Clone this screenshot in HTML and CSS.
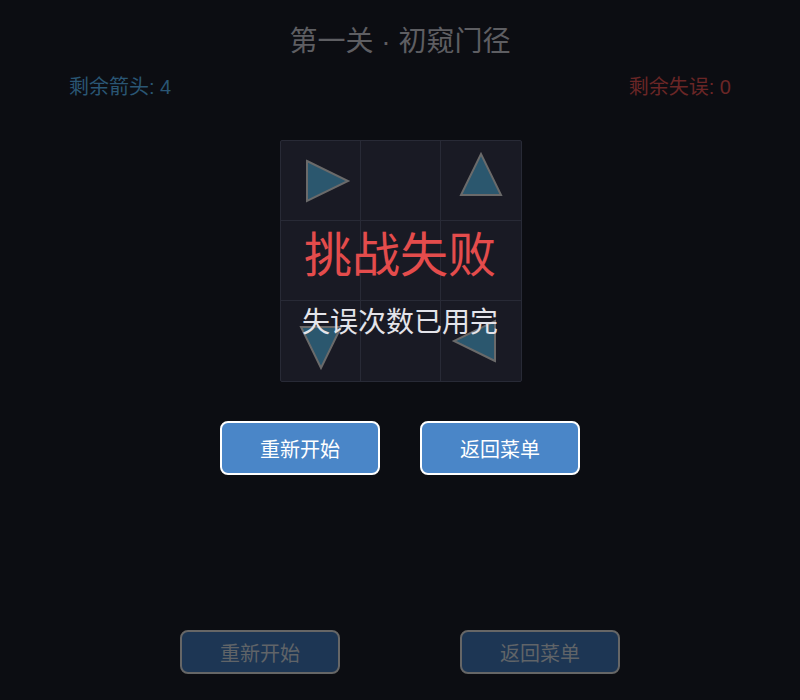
FILE: index.html
```html
<!doctype html>
<html lang="zh-CN">
  <head>
    <meta charset="UTF-8" />
    <meta name="viewport" content="width=device-width, initial-scale=1.0" />
    <title>箭头关卡</title>
    <link rel="stylesheet" href="styles.css">
  </head>
  <body>
    <div class="game">
      <h1 class="level-title">第一关 · 初窥门径</h1>

      <div class="stats">
        <span class="stat stat-arrows">剩余箭头: 4</span>
        <span class="stat stat-misses">剩余失误: 0</span>
      </div>

      <div class="board">
        <div class="cell">
          <svg class="arrow arrow-right" viewBox="0 0 80 80"><polygon points="26,20 67,40 26,60" /></svg>
        </div>
        <div class="cell"></div>
        <div class="cell">
          <svg class="arrow arrow-up" viewBox="0 0 80 80"><polygon points="26,20 67,40 26,60" /></svg>
        </div>
        <div class="cell"></div>
        <div class="cell"></div>
        <div class="cell"></div>
        <div class="cell">
          <svg class="arrow arrow-down" viewBox="0 0 80 80"><polygon points="26,20 67,40 26,60" /></svg>
        </div>
        <div class="cell"></div>
        <div class="cell">
          <svg class="arrow arrow-left" viewBox="0 0 80 80"><polygon points="26,20 67,40 26,60" /></svg>
        </div>
      </div>

      <div class="controls">
        <button class="btn btn-dim">重新开始</button>
        <button class="btn btn-dim">返回菜单</button>
      </div>
    </div>

    <!-- result overlay -->
    <div class="overlay">
      <h2 class="result-title">挑战失败</h2>
      <p class="result-text">失误次数已用完</p>
      <div class="result-actions">
        <button class="btn btn-primary">重新开始</button>
        <button class="btn btn-primary">返回菜单</button>
      </div>
    </div>
  </body>
</html>
```

FILE: styles.css
```css
:root {
  --bg-color: #0c0d12;
  --board-color: #191a24;
  --line-color: #282a36;
  --arrow-fill: #2b576e;
  --arrow-stroke: #6a6a6a;
  --primary-color: #4a86c8;
}

* {
  margin: 0;
  padding: 0;
  box-sizing: border-box;
}

body {
  font-family: 'Liberation Sans', 'Noto Sans CJK SC', sans-serif;
  background-color: var(--bg-color);
  color: #e4e4ea;
  width: 800px;
  height: 700px;
  overflow: hidden;
  position: relative;
}

.game {
  display: flex;
  flex-direction: column;
  align-items: center;
  padding-top: 24px;
}

.level-title {
  font-size: 28px;
  font-weight: 400;
  line-height: 36px;
  color: #5e5e62;
}

.stats {
  width: 100%;
  display: flex;
  justify-content: space-between;
  padding: 0 69px;
  margin-top: 13px;
}

.stat {
  font-size: 20px;
  line-height: 28px;
}

.stat-arrows {
  color: #2a5674;
}

.stat-misses {
  color: #6a2626;
}

.board {
  margin-top: 39px;
  margin-left: 1px;
  display: grid;
  grid-template-columns: repeat(3, 80px);
  grid-template-rows: repeat(3, 80px);
  background-color: var(--board-color);
  border: 1px solid var(--line-color);
  border-radius: 2px;
}

.cell {
  border-right: 1px solid var(--line-color);
  border-bottom: 1px solid var(--line-color);
}

.cell:nth-child(3n) {
  border-right: none;
}

.cell:nth-child(n + 7) {
  border-bottom: none;
}

.arrow {
  display: block;
  width: 80px;
  height: 80px;
}

.arrow polygon {
  fill: var(--arrow-fill);
  stroke: var(--arrow-stroke);
  stroke-width: 2;
  stroke-linejoin: miter;
}

.arrow-up {
  transform: rotate(-90deg);
}

.arrow-down {
  transform: rotate(90deg);
}

.arrow-left {
  transform: rotate(180deg);
}

.controls {
  margin-top: 248px;
  display: flex;
  gap: 120px;
}

.btn {
  width: 160px;
  font-family: inherit;
  font-size: 20px;
  border-radius: 8px;
  cursor: pointer;
}

.btn-dim {
  height: 44px;
  background-color: #1d3654;
  color: #606468;
  border: 2px solid #666;
}

.btn-primary {
  height: 54px;
  background-color: var(--primary-color);
  color: #fff;
  border: 2px solid #fff;
}

.overlay {
  position: absolute;
  inset: 0;
  display: flex;
  flex-direction: column;
  align-items: center;
  justify-content: center;
  padding-bottom: 2px;
}

.result-title {
  margin-top: 3px;
  font-size: 48px;
  font-weight: 400;
  line-height: 60px;
  color: #e44c4c;
}

.result-text {
  margin-top: 17px;
  font-size: 28px;
  line-height: 40px;
  color: #e4e4ea;
}

.result-actions {
  margin-top: 78px;
  display: flex;
  gap: 40px;
}
```
